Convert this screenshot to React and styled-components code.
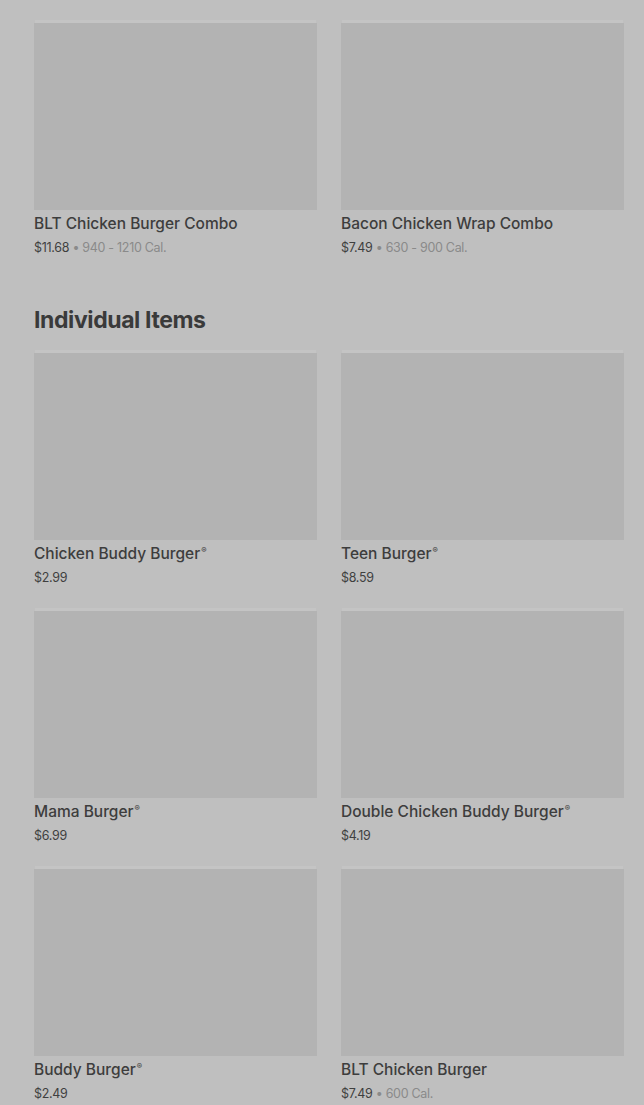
import styled, { createGlobalStyle } from "styled-components";

const GlobalStyle = createGlobalStyle`
  html, body {
    margin: 0;
    padding: 0;
    background: #bfbfbf;
    overflow: hidden;
  }
  body {
    font-family: Inter, "Liberation Sans", sans-serif;
    color: #3b3b3b;
  }
`;

const combos = [
  { name: "BLT Chicken Burger Combo", price: "$11.68", cal: "940 - 1210 Cal." },
  { name: "Bacon Chicken Wrap Combo", price: "$7.49", cal: "630 - 900 Cal." },
];

const items = [
  { name: "Chicken Buddy Burger", reg: true, price: "$2.99" },
  { name: "Teen Burger", reg: true, price: "$8.59" },
  { name: "Mama Burger", reg: true, price: "$6.99" },
  { name: "Double Chicken Buddy Burger", reg: true, price: "$4.19" },
  { name: "Buddy Burger", reg: true, price: "$2.49" },
  { name: "BLT Chicken Burger", price: "$7.49", cal: "600 Cal." },
];

export default function App() {
  return (
    <Page>
      <GlobalStyle />
      <PrevRow>
        <PriceLine>
          $12.29 <Cal>• 1020 - 1330 Cal.</Cal>
        </PriceLine>
        <PriceLine>
          $10.49 <Cal>• 880 - 1150 Cal.</Cal>
        </PriceLine>
      </PrevRow>
      <Grid>
        {combos.map((c) => (
          <ItemCard key={c.name} {...c} />
        ))}
      </Grid>
      <SectionTitle>Individual Items</SectionTitle>
      <Grid>
        {items.map((c) => (
          <ItemCard key={c.name} {...c} />
        ))}
      </Grid>
    </Page>
  );
}

function ItemCard({ name, reg, price, cal }) {
  return (
    <Card>
      <Thumb />
      <Name>
        {name}
        {reg && <Reg>®</Reg>}
      </Name>
      <PriceLine>
        {price}
        {cal && <Cal> • {cal}</Cal>}
      </PriceLine>
    </Card>
  );
}

const Page = styled.div`
  padding: 0 20px 0 34px;
`;

const PrevRow = styled.div`
  display: grid;
  grid-template-columns: 283px 283px;
  column-gap: 24px;
  margin-top: -22px;
  margin-bottom: 23px;
`;

const Grid = styled.div`
  display: grid;
  grid-template-columns: 283px 283px;
  column-gap: 24px;
  row-gap: 24px;
`;

const Card = styled.div`
  display: flex;
  flex-direction: column;
`;

const Thumb = styled.div`
  height: 187px;
  background: #b3b3b3;
  box-shadow: 0 -4px 0 -1px #c4c4c4;
`;

const Name = styled.div`
  margin-top: 3px;
  font-size: 15.5px;
  line-height: 22px;
  font-weight: 500;
  color: #3d3d3d;
`;

const Reg = styled.sup`
  font-size: 8px;
  line-height: 0;
  vertical-align: 6px;
  margin-left: 1px;
`;

const PriceLine = styled.div`
  margin-top: 4px;
  font-size: 12.5px;
  line-height: 18px;
  color: #3f3f3f;
  letter-spacing: -0.3px;
`;

const Cal = styled.span`
  color: #8a8a8a;
`;

const SectionTitle = styled.h2`
  margin: 46px 0 16px;
  font-size: 23px;
  line-height: 34px;
  font-weight: 700;
  letter-spacing: -0.4px;
  color: #3a3a3a;
`;
